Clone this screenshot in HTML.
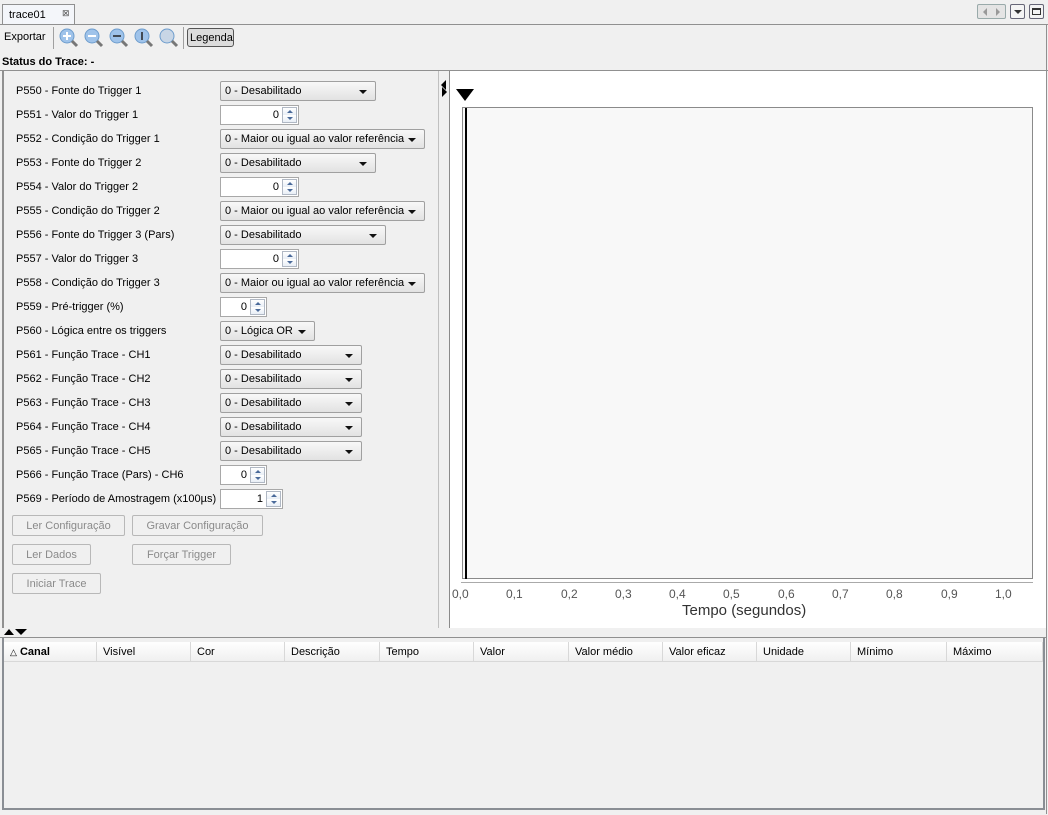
<!DOCTYPE html>
<html><head><meta charset="utf-8"><style>
*{box-sizing:border-box;margin:0;padding:0}
body{width:1048px;height:815px;background:#f0f0f0;font-family:"Liberation Sans",sans-serif;font-size:11px;color:#000;position:relative;overflow:hidden}
.a{position:absolute}
.lbl{position:absolute;left:16px;font-size:11px;line-height:14px;white-space:nowrap}
.dd{position:absolute;left:220px;height:20px;border:1px solid #a0a0a0;border-radius:2px;background:linear-gradient(#f8f8f8,#e2e2e2);padding:3px 0 0 4px;font-size:11px;line-height:13px;white-space:nowrap}
.dd:after{content:"";position:absolute;right:8px;top:8px;border-left:4px solid transparent;border-right:4px solid transparent;border-top:4px solid #111}
.sp{position:absolute;left:220px;height:20px;border:1px solid #a8a8a8;background:#fff;text-align:right;padding:3px 19px 0 0;font-size:11px;line-height:13px}
.sp i{position:absolute;right:1px;top:1px;width:15px;height:16px;border:1px solid #b0b8c4;background:linear-gradient(#fff 0,#e8eef6 50%,#fff 50%,#e8eef6 100%)}
.sp i:before{content:"";position:absolute;left:4px;top:2px;border-left:3px solid transparent;border-right:3px solid transparent;border-bottom:3px solid #4a6a9a}
.sp i:after{content:"";position:absolute;left:4px;top:9px;border-left:3px solid transparent;border-right:3px solid transparent;border-top:3px solid #4a6a9a}
.btn{position:absolute;height:21px;border:1px solid #b8b8b8;border-radius:2px;color:#8a8a8a;text-align:center;padding-top:4px;font-size:11px;line-height:13px;background:#f0f0f0}
.th{position:absolute;top:0;height:20px;border-right:1px solid #d8d8d8;padding:4px 0 0 6px;font-size:11px}
.tk{position:absolute;top:587px;color:#555;font-size:12px}
</style></head><body>
<div class="a" style="left:2px;top:4px;width:73px;height:21px;background:#f4f6fa;border:1px solid #909090;border-bottom:none;padding:4px 0 0 6px;font-size:11px">trace01<span style="position:absolute;left:59px;top:3px;font-size:9px;color:#555">⊠</span></div>
<div class="a" style="left:0;top:24px;width:1048px;height:1px;background:#909090"></div>
<div class="a" style="left:1046px;top:24px;width:1px;height:790px;background:#909090"></div>
<div class="a" style="left:977px;top:4px;width:29px;height:15px;border:1px solid #9aa;border-radius:2px;background:#e4e4e4"><span style="position:absolute;left:5px;top:3px;border-top:4px solid transparent;border-bottom:4px solid transparent;border-right:4px solid #999"></span><span style="position:absolute;left:18px;top:3px;border-top:4px solid transparent;border-bottom:4px solid transparent;border-left:4px solid #999"></span></div>
<div class="a" style="left:1010px;top:4px;width:15px;height:15px;border:1px solid #667;border-radius:2px;background:#f4f4f4"><span style="position:absolute;left:3px;top:5px;border-left:4px solid transparent;border-right:4px solid transparent;border-top:4px solid #333"></span></div>
<div class="a" style="left:1029px;top:4px;width:15px;height:15px;border:1px solid #667;border-radius:2px;background:#f4f4f4"><span style="position:absolute;left:2px;top:3px;width:9px;height:7px;border:1px solid #333;border-top-width:2px"></span></div>
<div class="a" style="left:4px;top:31px;font-size:11px">Exportar</div>
<div class="a" style="left:53px;top:27px;width:1px;height:22px;background:#a0a0a0"></div>
<svg class="a" style="left:58px;top:27px" width="125" height="22">
<g fill="#9fc3ea" stroke="#6d9ccc"><circle cx="9" cy="9" r="7"/><circle cx="34" cy="9" r="7"/><circle cx="59" cy="9" r="7"/><circle cx="84" cy="9" r="7"/><circle cx="109" cy="9" r="7" fill="#c8d6e6"/></g>
<g stroke="#777" stroke-width="3"><line x1="14" y1="14" x2="19" y2="19"/><line x1="39" y1="14" x2="44" y2="19"/><line x1="64" y1="14" x2="69" y2="19"/><line x1="89" y1="14" x2="94" y2="19"/><line x1="114" y1="14" x2="119" y2="19"/></g>
<g stroke="#fff" stroke-width="2"><line x1="5" y1="9" x2="13" y2="9"/><line x1="9" y1="5" x2="9" y2="13"/><line x1="30" y1="9" x2="38" y2="9"/></g>
<g stroke="#222" stroke-width="1.5"><line x1="55" y1="9" x2="63" y2="9"/><line x1="84" y1="5" x2="84" y2="13"/></g>
</svg>
<div class="a" style="left:183px;top:27px;width:1px;height:22px;background:#a0a0a0"></div>
<div class="a" style="left:187px;top:28px;width:47px;height:19px;border:1px solid #555;border-radius:3px;background:#dcdcdc;padding:3px 0 0 2px;font-size:11px;line-height:13px">Legenda</div>
<div class="a" style="left:2px;top:56px;font-weight:bold;font-size:11px">Status do Trace: -</div>
<div class="a" style="left:0;top:70px;width:1048px;height:1px;background:#909090"></div>
<div class="a" style="left:2px;top:71px;width:2px;height:557px;background:#909090"></div>
<div class="a" style="left:438px;top:71px;width:1px;height:557px;background:#c0c0c0"></div>
<div class="lbl" style="top:84px">P550 - Fonte do Trigger 1</div><div class="dd" style="top:81px;width:156px">0 - Desabilitado</div>
<div class="lbl" style="top:108px">P551 - Valor do Trigger 1</div><div class="sp" style="top:105px;width:79px">0<i></i></div>
<div class="lbl" style="top:132px">P552 - Condição do Trigger 1</div><div class="dd" style="top:129px;width:205px">0 - Maior ou igual ao valor referência</div>
<div class="lbl" style="top:156px">P553 - Fonte do Trigger 2</div><div class="dd" style="top:153px;width:156px">0 - Desabilitado</div>
<div class="lbl" style="top:180px">P554 - Valor do Trigger 2</div><div class="sp" style="top:177px;width:79px">0<i></i></div>
<div class="lbl" style="top:204px">P555 - Condição do Trigger 2</div><div class="dd" style="top:201px;width:205px">0 - Maior ou igual ao valor referência</div>
<div class="lbl" style="top:228px">P556 - Fonte do Trigger 3 (Pars)</div><div class="dd" style="top:225px;width:166px">0 - Desabilitado</div>
<div class="lbl" style="top:252px">P557 - Valor do Trigger 3</div><div class="sp" style="top:249px;width:79px">0<i></i></div>
<div class="lbl" style="top:276px">P558 - Condição do Trigger 3</div><div class="dd" style="top:273px;width:205px">0 - Maior ou igual ao valor referência</div>
<div class="lbl" style="top:300px">P559 - Pré-trigger (%)</div><div class="sp" style="top:297px;width:47px">0<i></i></div>
<div class="lbl" style="top:324px">P560 - Lógica entre os triggers</div><div class="dd" style="top:321px;width:95px">0 - Lógica OR</div>
<div class="lbl" style="top:348px">P561 - Função Trace - CH1</div><div class="dd" style="top:345px;width:142px">0 - Desabilitado</div>
<div class="lbl" style="top:372px">P562 - Função Trace - CH2</div><div class="dd" style="top:369px;width:142px">0 - Desabilitado</div>
<div class="lbl" style="top:396px">P563 - Função Trace - CH3</div><div class="dd" style="top:393px;width:142px">0 - Desabilitado</div>
<div class="lbl" style="top:420px">P564 - Função Trace - CH4</div><div class="dd" style="top:417px;width:142px">0 - Desabilitado</div>
<div class="lbl" style="top:444px">P565 - Função Trace - CH5</div><div class="dd" style="top:441px;width:142px">0 - Desabilitado</div>
<div class="lbl" style="top:468px">P566 - Função Trace (Pars) - CH6</div><div class="sp" style="top:465px;width:47px">0<i></i></div>
<div class="lbl" style="top:492px">P569 - Período de Amostragem (x100µs)</div><div class="sp" style="top:489px;width:63px">1<i></i></div>
<div class="btn" style="left:12px;top:515px;width:113px">Ler Configuração</div>
<div class="btn" style="left:132px;top:515px;width:131px">Gravar Configuração</div>
<div class="btn" style="left:12px;top:544px;width:79px">Ler Dados</div>
<div class="btn" style="left:132px;top:544px;width:99px">Forçar Trigger</div>
<div class="btn" style="left:12px;top:573px;width:89px">Iniciar Trace</div>
<div class="a" style="left:441px;top:80px;border-top:5px solid transparent;border-bottom:5px solid transparent;border-right:5px solid #000"></div>
<div class="a" style="left:442px;top:87px;border-top:5px solid transparent;border-bottom:5px solid transparent;border-left:5px solid #000"></div>
<div class="a" style="left:449px;top:71px;width:597px;height:557px;background:#fff;border-left:1px solid #8a8a8a"></div>
<div class="a" style="left:456px;top:89px;border-left:9px solid transparent;border-right:9px solid transparent;border-top:12px solid #000"></div>
<div class="a" style="left:462px;top:107px;width:571px;height:472px;background:#f8f8f8;border:1px solid #8a8a8a"></div>
<div class="a" style="left:465px;top:108px;width:2px;height:471px;background:#000"></div>
<div class="a" style="left:461px;top:582px;width:572px;height:1px;background:#aaa"></div>
<div class="tk" style="left:452px">0,0</div><div class="tk" style="left:506px">0,1</div><div class="tk" style="left:561px">0,2</div><div class="tk" style="left:615px">0,3</div><div class="tk" style="left:669px">0,4</div><div class="tk" style="left:723px">0,5</div><div class="tk" style="left:778px">0,6</div><div class="tk" style="left:832px">0,7</div><div class="tk" style="left:886px">0,8</div><div class="tk" style="left:941px">0,9</div><div class="tk" style="left:995px">1,0</div>
<div class="a" style="left:682px;top:602px;font-size:15px;color:#333">Tempo (segundos)</div>
<div class="a" style="left:0;top:628px;width:1046px;height:9px;background:#f0f0f0"></div>
<div class="a" style="left:4px;top:629px;border-left:5px solid transparent;border-right:5px solid transparent;border-bottom:6px solid #000"></div>
<div class="a" style="left:15px;top:629px;border-left:6px solid transparent;border-right:6px solid transparent;border-top:6px solid #000"></div>
<div class="a" style="left:0;top:637px;width:1046px;height:1px;background:#909090"></div>
<div class="a" style="left:2px;top:638px;width:1043px;height:172px;border:2px solid #8a8e94;border-top:none;background:#f0f0f0"></div>
<div class="a" style="left:4px;top:642px;width:1039px;height:20px;background:linear-gradient(#fff,#f0f0f0);border-bottom:1px solid #d8d8d8">
<div class="th" style="left:0;width:93px"><span style="font-size:9px">△</span> <b>Canal</b></div>
<div class="th" style="left:93px;width:94px">Visível</div>
<div class="th" style="left:187px;width:94px">Cor</div>
<div class="th" style="left:281px;width:95px">Descrição</div>
<div class="th" style="left:376px;width:94px">Tempo</div>
<div class="th" style="left:470px;width:95px">Valor</div>
<div class="th" style="left:565px;width:94px">Valor médio</div>
<div class="th" style="left:659px;width:94px">Valor eficaz</div>
<div class="th" style="left:753px;width:94px">Unidade</div>
<div class="th" style="left:847px;width:96px">Mínimo</div>
<div class="th" style="left:943px;width:96px">Máximo</div>
</div>
</body></html>
